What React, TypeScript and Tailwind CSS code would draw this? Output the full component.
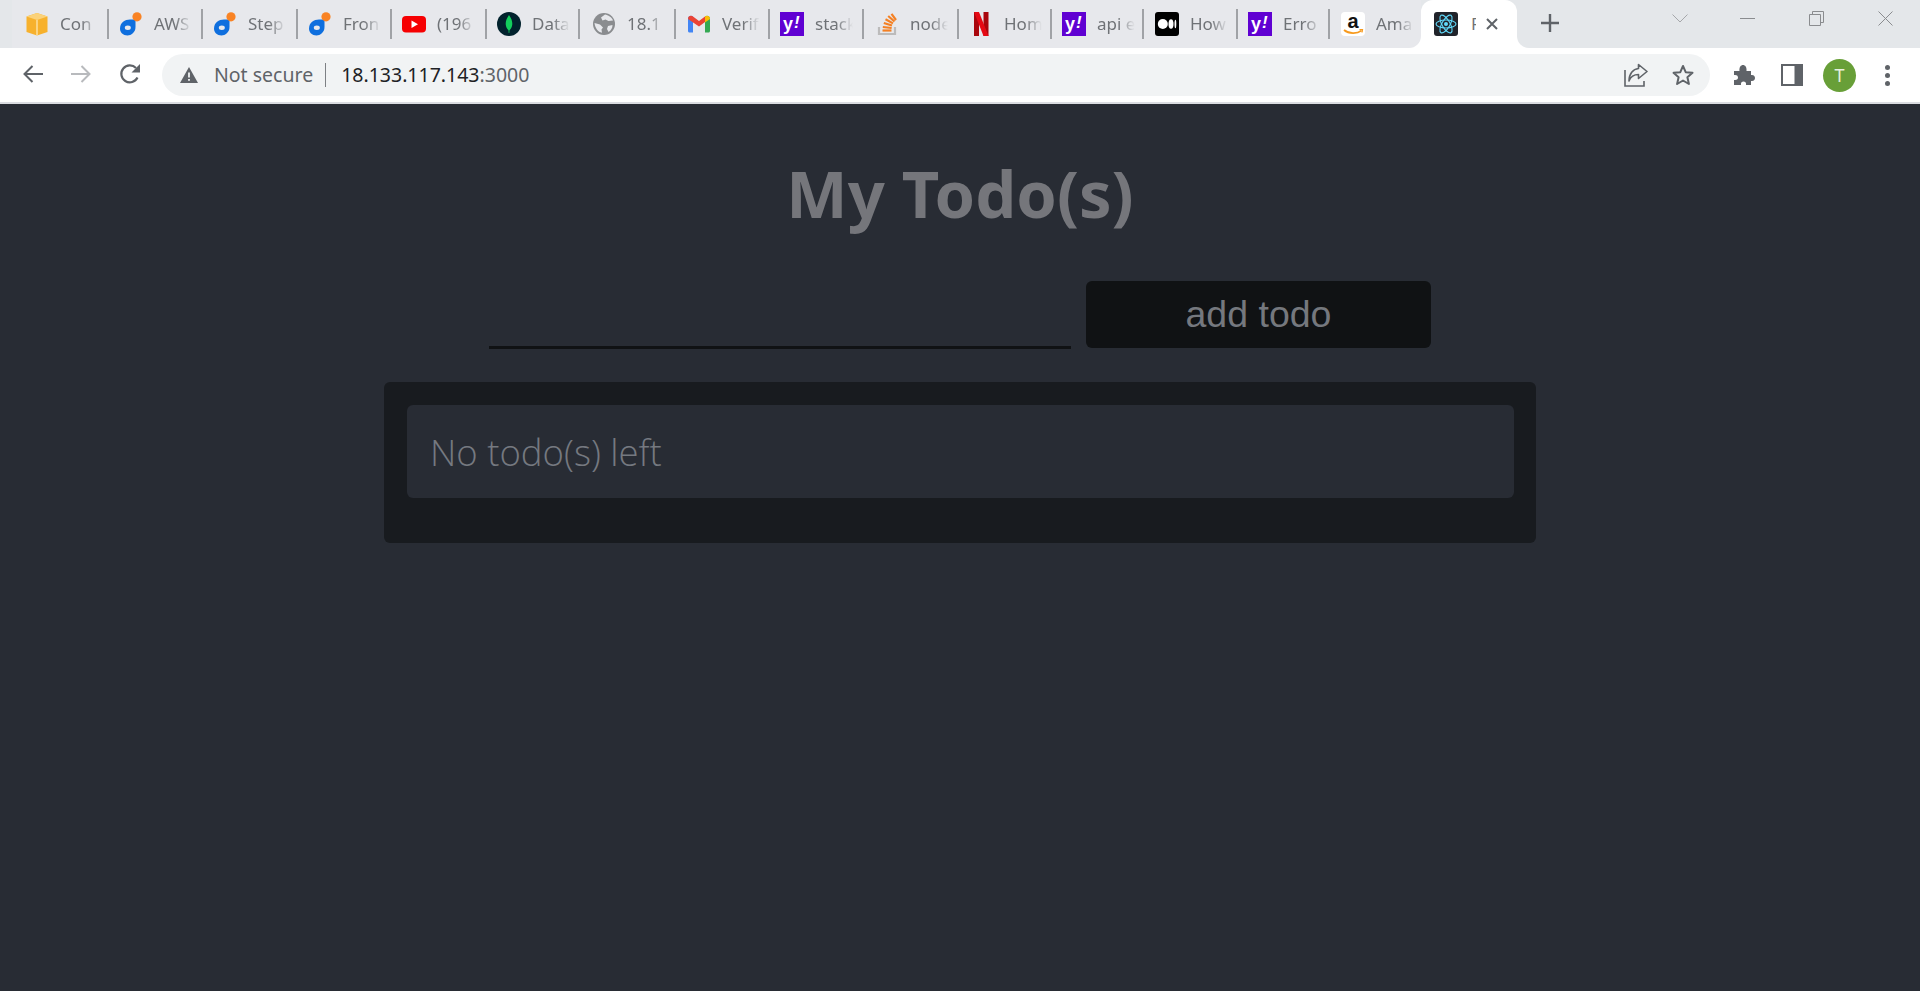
import React from "react";

const Cube = () => (
  <svg width="24" height="24" viewBox="0 0 24 24">
    <path d="M12 1 L22.5 4.5 V20 L12 23.5 L1.5 20 V4.5 Z" fill="#f7b12d" />
    <path d="M1.5 4.5 L12 8 L22.5 4.5 L12 1 Z" fill="#fbd27a" />
    <path d="M12 8 V23.5" stroke="#fde3a8" strokeWidth="1.4" />
  </svg>
);
const Drop = () => (
  <svg width="24" height="24" viewBox="0 0 24 24">
    <path d="M1 16.5 C1 10.5 6 7.5 11 7.5 L16.5 7.5 L16.5 15 C16.5 20.5 12 23.5 8.5 23.5 C4 23.5 1 20.5 1 16.5 Z" fill="#0f6fde" />
    <ellipse cx="8.8" cy="15.8" rx="3" ry="2.2" fill="#e7e8ec" />
    <circle cx="18" cy="4.8" r="4.6" fill="#f98324" />
  </svg>
);
const Youtube = () => (
  <svg width="24" height="24" viewBox="0 0 24 24">
    <rect x="0" y="4" width="24" height="16.5" rx="4" fill="#f60002" />
    <path d="M9.5 8.5 L16 12.2 L9.5 16 Z" fill="#fff" />
  </svg>
);
const Mongo = () => (
  <svg width="24" height="24" viewBox="0 0 24 24">
    <circle cx="12" cy="12" r="12" fill="#02222d" />
    <path d="M12 3 C14.8 7 15.6 10 15.2 13 C14.8 16 13.2 17.5 12.5 18.2 L12.3 21 H11.7 L11.5 18.2 C10.8 17.5 9.2 16 8.8 13 C8.4 10 9.2 7 12 3 Z" fill="#13cf5c" />
  </svg>
);
const Globe = () => (
  <svg width="24" height="24" viewBox="0 0 24 24">
    <circle cx="12" cy="12" r="11" fill="#8a8c8f" />
    <path d="M13 2.5 C16 3 20 5 21 8.5 L16.5 9 L13.5 7.5 L10.5 8.5 L9 5.5 Z" fill="#e7e8ec" />
    <path d="M2.5 11 L8 12.5 L11 15.5 L9.5 17.5 L10 20.8 C6 20 3 16 2.5 11 Z" fill="#e7e8ec" />
    <path d="M16 14 L20.5 13 C20.5 16 19 18.5 16.5 20 L15 17 Z" fill="#e7e8ec" />
  </svg>
);
const Gmail = () => (
  <svg width="24" height="24" viewBox="0 0 24 24">
    <path d="M1 7 C1 4 4 3 6 4.5 L6 20.5 H2.5 C1.6 20.5 1 19.9 1 19 Z" fill="#4285f4" />
    <path d="M23 7 C23 4 20 3 18 4.5 L18 20.5 H21.5 C22.4 20.5 23 19.9 23 19 Z" fill="#34a853" />
    <path d="M1 7 C1 4 4 3 6 4.5 L12 9 L18 4.5 V10 L12 14.5 L1 7 Z" fill="#ea4335" />
    <path d="M18 4.5 C20 3 23 4 23 7 L18 10.6 Z" fill="#fbbc04" />
  </svg>
);
const Yahoo = () => (
  <svg width="24" height="24" viewBox="0 0 24 24">
    <rect width="24" height="24" fill="#6001d2" />
    <text x="3" y="18" fontFamily="'Liberation Sans', sans-serif" fontWeight="700" fontSize="18" fill="#fff">y</text>
    <text x="14" y="16" fontFamily="'Liberation Sans', sans-serif" fontWeight="700" fontStyle="italic" fontSize="17" fill="#fff">!</text>
  </svg>
);
const Stack = () => (
  <svg width="24" height="24" viewBox="0 0 24 24">
    <path d="M4 15 V22 H20 V15" fill="none" stroke="#bcbbbb" strokeWidth="2.2" />
    <g stroke="#f48024" strokeWidth="2.2" fill="none">
      <path d="M7.5 18.5 H16.5" />
      <path d="M7.8 15 L16.6 16" />
      <path d="M8.8 11 L17 13.5" />
      <path d="M10.5 7.3 L18 11.4" />
      <path d="M13.2 4 L19.5 9.5" />
      <path d="M16.5 1.8 L21 8" />
    </g>
  </svg>
);
const Netflix = () => (
  <svg width="24" height="24" viewBox="0 0 24 24">
    <rect x="5" y="0" width="5" height="24" fill="#a9060d" />
    <rect x="14.5" y="0" width="5" height="24" fill="#a9060d" />
    <path d="M5 0 H10 L19.5 24 H14.5 Z" fill="#e50914" />
  </svg>
);
const Medium = () => (
  <svg width="24" height="24" viewBox="0 0 24 24">
    <rect width="24" height="24" rx="3" fill="#000" />
    <circle cx="7.8" cy="12" r="5" fill="#fff" />
    <ellipse cx="16" cy="12" rx="2.5" ry="4.7" fill="#fff" />
    <ellipse cx="20.4" cy="12" rx="0.9" ry="4.2" fill="#fff" />
  </svg>
);
const Amazon = () => (
  <svg width="24" height="24" viewBox="0 0 24 24">
    <rect width="24" height="24" rx="4" fill="#fff" />
    <text x="12" y="16" textAnchor="middle" fontFamily="'Liberation Sans', sans-serif" fontWeight="700" fontSize="20" fill="#111">a</text>
    <path d="M3 18 C8 22 16 22 20.5 18.6" fill="none" stroke="#f79a1e" strokeWidth="1.8" />
    <path d="M18.5 17.6 L21.5 17.6 L21 20.5" fill="none" stroke="#f79a1e" strokeWidth="1.2" />
  </svg>
);
const ReactIcon = () => (
  <svg width="24" height="24" viewBox="0 0 24 24">
    <rect width="24" height="24" rx="3" fill="#20232a" />
    <g fill="none" stroke="#61dafb" strokeWidth="1.1">
      <ellipse cx="12" cy="12" rx="10" ry="4" />
      <ellipse cx="12" cy="12" rx="10" ry="4" transform="rotate(60 12 12)" />
      <ellipse cx="12" cy="12" rx="10" ry="4" transform="rotate(120 12 12)" />
    </g>
    <circle cx="12" cy="12" r="2" fill="#61dafb" />
  </svg>
);

const tabs = [
  { title: "Con", box: "w-[97px] pl-[13px]", Icon: Cube },
  { title: "AWS", box: "w-[94px] pl-[10px]", Icon: Drop },
  { title: "Step", box: "w-[95px] pl-[10px]", Icon: Drop },
  { title: "Fron", box: "w-[94px] pl-[10px]", Icon: Drop },
  { title: "(196", box: "w-[95px] pl-[10px]", Icon: Youtube },
  { title: "Data", box: "w-[93px] pl-[10px]", Icon: Mongo },
  { title: "18.1", box: "w-[96px] pl-[12px]", Icon: Globe },
  { title: "Verif", box: "w-[94px] pl-[11px]", Icon: Gmail },
  { title: "stack", box: "w-[94px] pl-[10px]", Icon: Yahoo },
  { title: "node", box: "w-[95px] pl-[11px]", Icon: Stack },
  { title: "Hom", box: "w-[93px] pl-[10px]", Icon: Netflix },
  { title: "api e", box: "w-[92px] pl-[10px]", Icon: Yahoo },
  { title: "How", box: "w-[94px] pl-[11px]", Icon: Medium },
  { title: "Erro", box: "w-[92px] pl-[10px]", Icon: Yahoo },
  { title: "Ama", box: "w-[91px] pl-[11px]", Icon: Amazon },
];

export default function App() {
  return (
    <div className="flex h-screen flex-col overflow-hidden bg-[#282c34] font-['Noto_Sans',sans-serif]">
      <header className="flex h-[48px] shrink-0 bg-[#e4e7ea]">
        <div className="w-[12px] shrink-0" />
        <div className="bg-white">
          <div className="flex h-[48px] items-center rounded-br-[12px] bg-[#e7e8ec]">
            {tabs.map((t, i) => (
              <div key={i} className={`flex h-full shrink-0 items-center ${t.box}`}>
                <t.Icon />
                <span className="ml-[11px] w-[38px] overflow-hidden whitespace-nowrap text-[17px] text-[#6f7276] [mask-image:linear-gradient(to_right,black_55%,transparent)]">
                  {t.title}
                </span>
                {i < tabs.length - 1 && <div className="mb-[1px] ml-auto h-[30px] w-[2px] bg-[#a0a2a6]" />}
              </div>
            ))}
          </div>
        </div>
        <div className="flex h-[48px] w-[96px] shrink-0 items-center rounded-t-[12px] bg-white pl-[13px]">
          <ReactIcon />
          <span className="ml-[13px] w-[5px] overflow-hidden text-[17px] text-[#6f7276]">R</span>
          <svg className="ml-[10px]" width="12" height="12" viewBox="0 0 12 12">
            <path d="M1 1 L11 11 M11 1 L1 11" stroke="#5f6368" strokeWidth="2" />
          </svg>
        </div>
        <div className="flex-1 bg-white">
          <div className="flex h-[48px] items-start rounded-bl-[12px] bg-[#e4e7ea]">
            <svg className="ml-[24px] mt-[14px]" width="18" height="18" viewBox="0 0 18 18">
              <path d="M9 0 V18 M0 9 H18" stroke="#5f6368" strokeWidth="2.4" />
            </svg>
            <svg className="ml-[113px] mt-[14px]" width="16" height="9" viewBox="0 0 16 9">
              <path d="M0.5 0.5 L8 8 L15.5 0.5" fill="none" stroke="#a5a7aa" strokeWidth="1" />
            </svg>
            <svg className="ml-[52px] mt-[18px]" width="15" height="1" viewBox="0 0 15 1">
              <rect width="15" height="1" fill="#8a8c8f" />
            </svg>
            <svg className="ml-[54px] mt-[11px]" width="15" height="15" viewBox="0 0 15 15">
              <path d="M0.5 3.5 H11.5 V14.5 H0.5 Z M3.5 3.5 V0.5 H14.5 V11.5 H11.5" fill="none" stroke="#8a8c8f" strokeWidth="1" />
            </svg>
            <svg className="ml-[54px] mt-[11px]" width="15" height="15" viewBox="0 0 15 15">
              <path d="M0.5 0.5 L14.5 14.5 M14.5 0.5 L0.5 14.5" fill="none" stroke="#8a8c8f" strokeWidth="1" />
            </svg>
          </div>
        </div>
      </header>

      <div className="flex h-[56px] shrink-0 items-start border-b-2 border-[#dadce0] bg-white">
        <svg className="ml-[23px] mt-[17px]" width="20" height="18" viewBox="0 0 20 18">
          <path d="M20 9 H2 M9.5 1 L1.5 9 L9.5 17" fill="none" stroke="#5f6368" strokeWidth="2" />
        </svg>
        <svg className="ml-[28px] mt-[17px]" width="20" height="18" viewBox="0 0 20 18">
          <path d="M0 9 H18 M10.5 1 L18.5 9 L10.5 17" fill="none" stroke="#b8babd" strokeWidth="2" />
        </svg>
        <svg className="ml-[28px] mt-[15px]" width="22" height="22" viewBox="0 0 22 22">
          <path d="M18.5 14.5 A8.5 8.5 0 1 1 17 5" fill="none" stroke="#5f6368" strokeWidth="2.2" />
          <path d="M21 1 V9.5 H12.5 Z" fill="#5f6368" />
        </svg>
        <div className="ml-[21px] mt-[6px] flex h-[42px] w-[1548px] items-center rounded-full bg-[#f1f3f4] pl-[18px]">
          <svg width="18" height="16" viewBox="0 0 18 16">
            <path d="M9 0 L18 16 H0 Z" fill="#5f6368" />
            <rect x="8.1" y="5.5" width="1.8" height="5" fill="#f1f3f4" />
            <rect x="8.1" y="12" width="1.8" height="1.8" fill="#f1f3f4" />
          </svg>
          <span className="ml-[16px] whitespace-nowrap text-[19.5px] text-[#5f6368]">Not secure</span>
          <div className="ml-[12px] h-[24px] w-px bg-[#7d8084]" />
          <span className="ml-[15px] whitespace-nowrap text-[19.5px] text-[#202124]">
            18.133.117.143<span className="text-[#5f6368]">:3000</span>
          </span>
          <svg className="ml-auto" width="24" height="24" viewBox="0 0 24 24">
            <path d="M1 7 V23 H20 V18" fill="none" stroke="#5f6368" strokeWidth="1.6" />
            <path d="M14.5 1.5 L23 8.5 L14.5 15.5 V11.5 C10 11.5 6.5 14 5 18 C5 11 9 6 14.5 5.5 Z" fill="none" stroke="#5f6368" strokeWidth="1.6" strokeLinejoin="round" />
          </svg>
          <svg className="ml-[24px] mr-[16px]" width="22" height="22" viewBox="0 0 22 22">
            <path d="M11 2 L13.7 8.2 L20.5 8.8 L15.4 13.3 L16.9 20 L11 16.5 L5.1 20 L6.6 13.3 L1.5 8.8 L8.3 8.2 Z" fill="none" stroke="#5f6368" strokeWidth="2" strokeLinejoin="round" />
          </svg>
        </div>
        <svg className="ml-[23px] mt-[16px]" width="22" height="22" viewBox="0 0 22 22">
          <path d="M1 7 H6.5 C6 3 8 1 10 1 C12 1 14 3 13.5 7 H18 V11 C21 10.5 22 12.5 22 14 C22 15.5 21 17.5 18 17 V21 H13 C13.5 18.5 12 17.5 10.5 17.5 C9 17.5 7.5 18.5 8 21 H1 V16 C4 16.5 5 15 5 13.5 C5 12 4 10.5 1 11 Z" fill="#5f6368" />
        </svg>
        <svg className="ml-[26px] mt-[16px]" width="22" height="22" viewBox="0 0 22 22">
          <rect x="1" y="1" width="20" height="20" fill="none" stroke="#5f6368" strokeWidth="2" />
          <rect x="13.5" y="1" width="7.5" height="20" fill="#5f6368" />
        </svg>
        <div className="ml-[20px] mt-[11px] flex h-[33px] w-[33px] items-center justify-center rounded-full bg-[#689f38] text-[18px] text-[#e8f0e0]">
          T
        </div>
        <div className="ml-[29px] mt-[17px] flex flex-col gap-[3px]">
          <div className="h-[5px] w-[5px] rounded-full bg-[#5f6368]" />
          <div className="h-[5px] w-[5px] rounded-full bg-[#5f6368]" />
          <div className="h-[5px] w-[5px] rounded-full bg-[#5f6368]" />
        </div>
      </div>

      <main className="flex flex-1 flex-col items-center">
        <h1 className="mt-[54px] h-[123px] text-[65px] font-bold leading-[70px] text-[#75767b]">My Todo(s)</h1>
        <form className="flex items-end gap-[15px]">
          <input className="h-[68px] w-[582px] border-b-[3px] border-[#101214] bg-transparent outline-none" />
          <button type="button" className="mb-px h-[67px] w-[345px] rounded-[6px] bg-[#101214] font-['Liberation_Sans',sans-serif] text-[37.5px] text-[#75787e]">
            add todo
          </button>
        </form>
        <section className="mt-[33px] w-[1152px] rounded-[6px] bg-[#181b1f] pb-[45px] pl-[23px] pr-[22px] pt-[23px]">
          <div className="flex h-[93px] items-center rounded-[6px] bg-[#282c34] pl-[23px] pt-[2px] font-['Open_Sans',sans-serif] text-[36.5px] font-light text-[#757980]">
            No todo(s) left
          </div>
        </section>
      </main>
    </div>
  );
}
